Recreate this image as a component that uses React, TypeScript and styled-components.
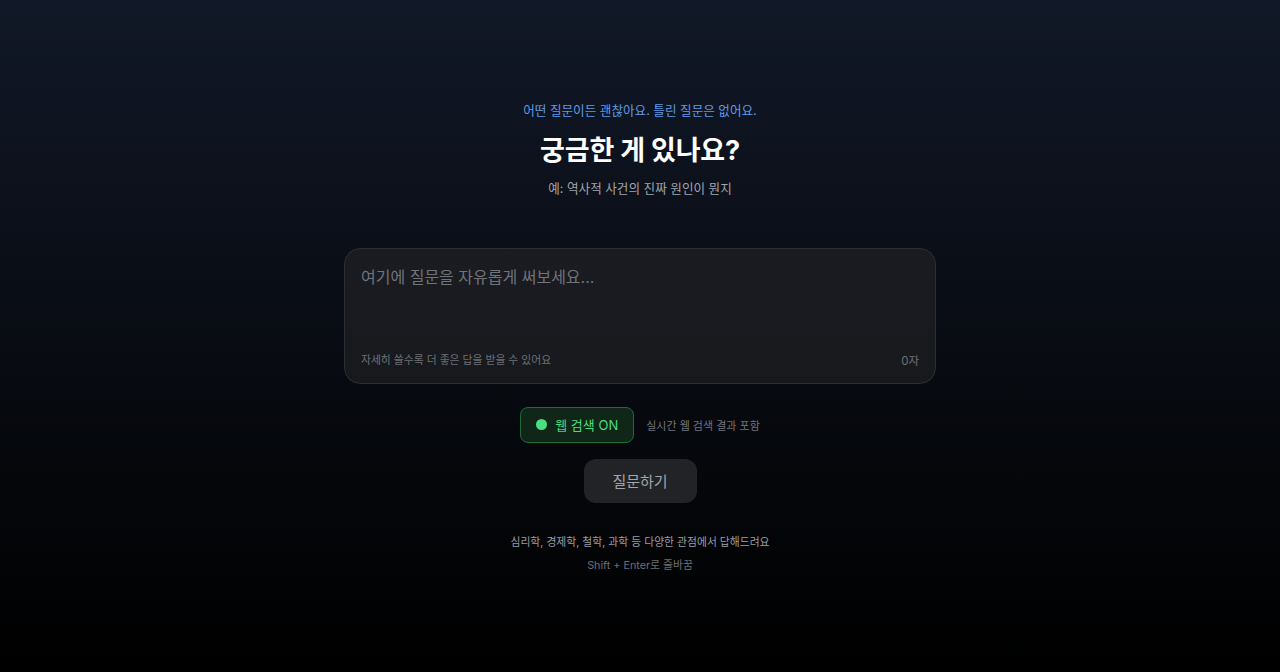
import * as React from 'react';
import styled, { createGlobalStyle } from 'styled-components';

const GlobalStyle = createGlobalStyle`
  html, body {
    margin: 0;
    padding: 0;
    background: #000;
  }
  body {
    font-family: Inter, "Noto Sans CJK KR", "Noto Sans", sans-serif;
    -webkit-font-smoothing: antialiased;
  }
  * { box-sizing: border-box; }
`;

const Page = styled.main`
  min-height: 100vh;
  background: linear-gradient(to bottom, #111827 0%, #05070b 70%, #000 100%);
  display: flex;
  flex-direction: column;
  align-items: center;
  justify-content: center;
  padding: 3px 16px 0;
`;

const Header = styled.header`
  display: flex;
  flex-direction: column;
  align-items: center;
  margin-bottom: 50px;
`;

const Eyebrow = styled.p`
  margin: 0 0 14px;
  font-size: 12.6px;
  line-height: 18px;
  color: #5f9be8;
`;

const Title = styled.h1`
  margin: 0 0 12px;
  font-size: 27px;
  line-height: 34px;
  font-weight: 700;
  color: #fff;
  letter-spacing: -0.2px;
`;

const Example = styled.p`
  margin: 0;
  font-size: 12.6px;
  line-height: 18px;
  color: #a1a5ad;
`;

const InputCard = styled.div`
  width: 592px;
  border: 1px solid #2b2e35;
  border-radius: 16px;
  background: linear-gradient(to bottom, #1a1c22, #17191d);
  padding: 16px 16px 14px;
  display: flex;
  flex-direction: column;
  gap: 8px;
`;

const TextArea = styled.textarea`
  height: 80px;
  resize: none;
  border: none;
  outline: none;
  background: transparent;
  padding: 0;
  font-family: inherit;
  font-size: 16px;
  line-height: 24px;
  color: #e5e7eb;
  &::placeholder {
    color: #70737a;
  }
`;

const CardFooter = styled.div`
  display: flex;
  justify-content: space-between;
  align-items: center;
  font-size: 10.8px;
  line-height: 16px;
  color: #6e7178;
`;

const Count = styled.span`
  font-size: 11.5px;
`;

const ToggleRow = styled.div`
  margin-top: 23px;
  display: flex;
  align-items: center;
  gap: 12px;
`;

const Toggle = styled.button<{ $on: boolean }>`
  display: flex;
  align-items: center;
  gap: 8px;
  height: 36px;
  padding: 0 15px;
  border-radius: 8px;
  border: 1px solid ${(p) => (p.$on ? '#1f6b3a' : '#2b2e35')};
  background: ${(p) => (p.$on ? '#0f2618' : '#17191d')};
  color: ${(p) => (p.$on ? '#4ade80' : '#9ca3af')};
  font-family: inherit;
  font-size: 13px;
  cursor: pointer;
`;

const Dot = styled.span`
  width: 11px;
  height: 11px;
  border-radius: 50%;
  background: #4ade80;
`;

const ToggleHint = styled.span`
  font-size: 11px;
  color: #71747b;
`;

const Submit = styled.button`
  margin-top: 16px;
  width: 113px;
  height: 44px;
  border: none;
  border-radius: 12px;
  background: #222326;
  color: #a3a5aa;
  font-family: inherit;
  font-size: 15px;
  cursor: pointer;
`;

const Footer = styled.div`
  margin-top: 32px;
  display: flex;
  flex-direction: column;
  align-items: center;
  gap: 7px;
`;

const FooterLine = styled.p<{ $muted?: boolean }>`
  margin: 0;
  font-size: 10.8px;
  line-height: 16px;
  color: ${(p) => (p.$muted ? '#6b6e75' : '#9a9da4')};
`;

export default function App() {
  const [text, setText] = React.useState('');
  const [web, setWeb] = React.useState(true);

  return (
    <>
      <GlobalStyle />
      <Page>
        <Header>
          <Eyebrow>어떤 질문이든 괜찮아요. 틀린 질문은 없어요.</Eyebrow>
          <Title>궁금한 게 있나요?</Title>
          <Example>예: 역사적 사건의 진짜 원인이 뭔지</Example>
        </Header>
        <InputCard>
          <TextArea
            value={text}
            onChange={(e) => setText(e.target.value)}
            placeholder="여기에 질문을 자유롭게 써보세요..."
          />
          <CardFooter>
            <span>자세히 쓸수록 더 좋은 답을 받을 수 있어요</span>
            <Count>{text.length}자</Count>
          </CardFooter>
        </InputCard>
        <ToggleRow>
          <Toggle $on={web} onClick={() => setWeb(!web)}>
            {web && <Dot />}웹 검색 {web ? 'ON' : 'OFF'}
          </Toggle>
          <ToggleHint>실시간 웹 검색 결과 포함</ToggleHint>
        </ToggleRow>
        <Submit>질문하기</Submit>
        <Footer>
          <FooterLine>심리학, 경제학, 철학, 과학 등 다양한 관점에서 답해드려요</FooterLine>
          <FooterLine $muted>Shift + Enter로 줄바꿈</FooterLine>
        </Footer>
      </Page>
    </>
  );
}
